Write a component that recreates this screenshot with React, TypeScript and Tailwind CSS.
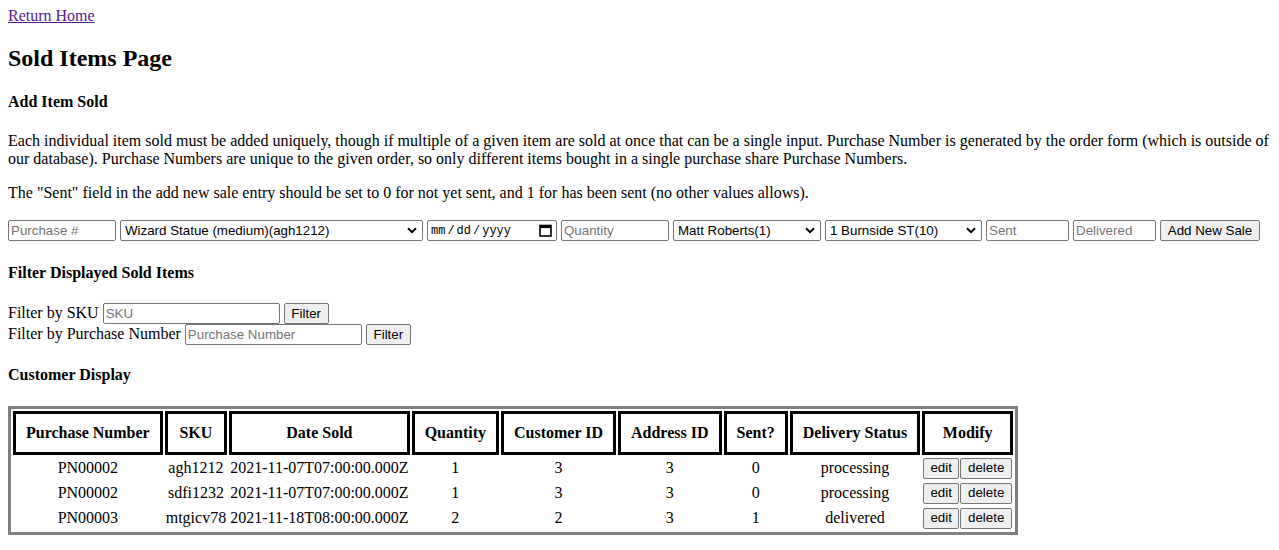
import React from "react";

const ctl = "font-['Liberation_Sans',Arial,sans-serif] text-[13.333px] text-black";
const inputCls = `h-[21px] border border-[#767676] rounded-[2px] bg-white px-[2px] ${ctl} placeholder:text-[#757575] outline-none`;
const btnCls = `h-[21px] border border-[#767676] rounded-[2px] bg-[#efefef] px-[6px] ${ctl} leading-none`;

function Chevron() {
  return (
    <svg
      className="pointer-events-none absolute right-[6px] top-[7px]"
      width="10"
      height="7"
      viewBox="0 0 10 7"
      fill="none"
    >
      <path d="M1 1.2 L5 5.2 L9 1.2" stroke="#000" strokeWidth="2" />
    </svg>
  );
}

function Sel({ w, label }: { w: string; label: string }) {
  return (
    <div className={`relative shrink-0 ${w}`}>
      <select
        className={`w-full h-[21px] appearance-none border border-[#767676] rounded-[2px] bg-white pl-[4px] pr-[18px] ${ctl} outline-none`}
        defaultValue={label}
      >
        <option value={label}>{label}</option>
      </select>
      <Chevron />
    </div>
  );
}

function DateBox() {
  return (
    <div className="flex items-center justify-between shrink-0 w-[130px] h-[21px] border border-[#767676] rounded-[2px] bg-white pl-[3px] pr-[4px] text-black">
      <span className="flex gap-[2px] font-['Liberation_Mono','DejaVu_Sans_Mono',monospace] text-[12px]">
        <span>mm</span>
        <span>/</span>
        <span>dd</span>
        <span>/</span>
        <span>yyyy</span>
      </span>
      <svg width="13" height="13" viewBox="0 0 13 13" fill="none">
        <rect x="1" y="1.5" width="11" height="10.5" stroke="#000" strokeWidth="1.6" />
        <rect x="1" y="1.5" width="11" height="2.6" fill="#000" />
      </svg>
    </div>
  );
}

const rows = [
  ["PN00002", "agh1212", "2021-11-07T07:00:00.000Z", "1", "3", "3", "0", "processing"],
  ["PN00002", "sdfi1232", "2021-11-07T07:00:00.000Z", "1", "3", "3", "0", "processing"],
  ["PN00003", "mtgicv78", "2021-11-18T08:00:00.000Z", "2", "2", "3", "1", "delivered"],
];

const heads = [
  "Purchase Number",
  "SKU",
  "Date Sold",
  "Quantity",
  "Customer ID",
  "Address ID",
  "Sent?",
  "Delivery Status",
  "Modify",
];

export default function App() {
  return (
    <div className="bg-white min-h-[550px] px-2 pt-[7px] pb-2 font-['Liberation_Serif','Times_New_Roman',serif] text-[16px] leading-[normal] text-black">
      <a href="#" className="text-[#551a8b] underline">
        Return Home
      </a>
      <h2 className="text-[24px] font-bold my-[19.92px]">Sold Items Page</h2>
      <h4 className="text-[16px] font-bold my-[21.28px]">Add Item Sold</h4>
      <p className="my-4">
        Each individual item sold must be added uniquely, though if multiple of a given item are sold at once that
        can be a single input. Purchase Number is generated by the order form (which is outside of our database).
        Purchase Numbers are unique to the given order, so only different items bought in a single purchase share
        Purchase Numbers.
      </p>
      <p className="my-4">
        The "Sent" field in the add new sale entry should be set to 0 for not yet sent, and 1 for has been sent (no
        other values allows).
      </p>
      <div className="flex items-start gap-1 h-[24px] pt-[2px]">
        <input className={`${inputCls} w-[108px] shrink-0`} placeholder="Purchase #" />
        <Sel w="w-[303px]" label="Wizard Statue (medium)(agh1212)" />
        <DateBox />
        <input className={`${inputCls} w-[108px] shrink-0`} placeholder="Quantity" />
        <Sel w="w-[148px]" label="Matt Roberts(1)" />
        <Sel w="w-[157px]" label="1 Burnside ST(10)" />
        <input className={`${inputCls} w-[83px] shrink-0`} placeholder="Sent" />
        <input className={`${inputCls} w-[83px] shrink-0`} placeholder="Delivered" />
        <button className={`${btnCls} w-[100px] shrink-0`}>Add New Sale</button>
      </div>
      <h4 className="text-[16px] font-bold my-[21.28px]">Filter Displayed Sold Items</h4>
      <div className="flex items-center gap-1 h-[21px]">
        <span>Filter by SKU</span>
        <input className={`${inputCls} w-[177px]`} placeholder="SKU" />
        <button className={`${btnCls} w-[45px]`}>Filter</button>
      </div>
      <div className="flex items-center gap-1 h-[21px]">
        <span>Filter by Purchase Number</span>
        <input className={`${inputCls} w-[177px]`} placeholder="Purchase Number" />
        <button className={`${btnCls} w-[45px]`}>Filter</button>
      </div>
      <h4 className="text-[16px] font-bold my-[21.28px]">Customer Display</h4>
      <table className="border-separate border-spacing-[2px] border-[3px] border-[#808080]">
        <thead>
          <tr>
            {heads.map((h) => (
              <th key={h} className="border-[3px] border-black p-[10px] font-bold text-center">
                {h}
              </th>
            ))}
          </tr>
        </thead>
        <tbody>
          {rows.map((r, i) => (
            <tr key={i}>
              {r.map((c, j) => (
                <td key={j} className="p-px text-center">
                  {c}
                </td>
              ))}
              <td className="p-px text-center whitespace-nowrap">
                <div className="flex gap-px">
                  <button className={`${btnCls} w-[36px] px-0`}>edit</button>
                  <button className={`${btnCls} w-[52px] px-0`}>delete</button>
                </div>
              </td>
            </tr>
          ))}
        </tbody>
      </table>
    </div>
  );
}
